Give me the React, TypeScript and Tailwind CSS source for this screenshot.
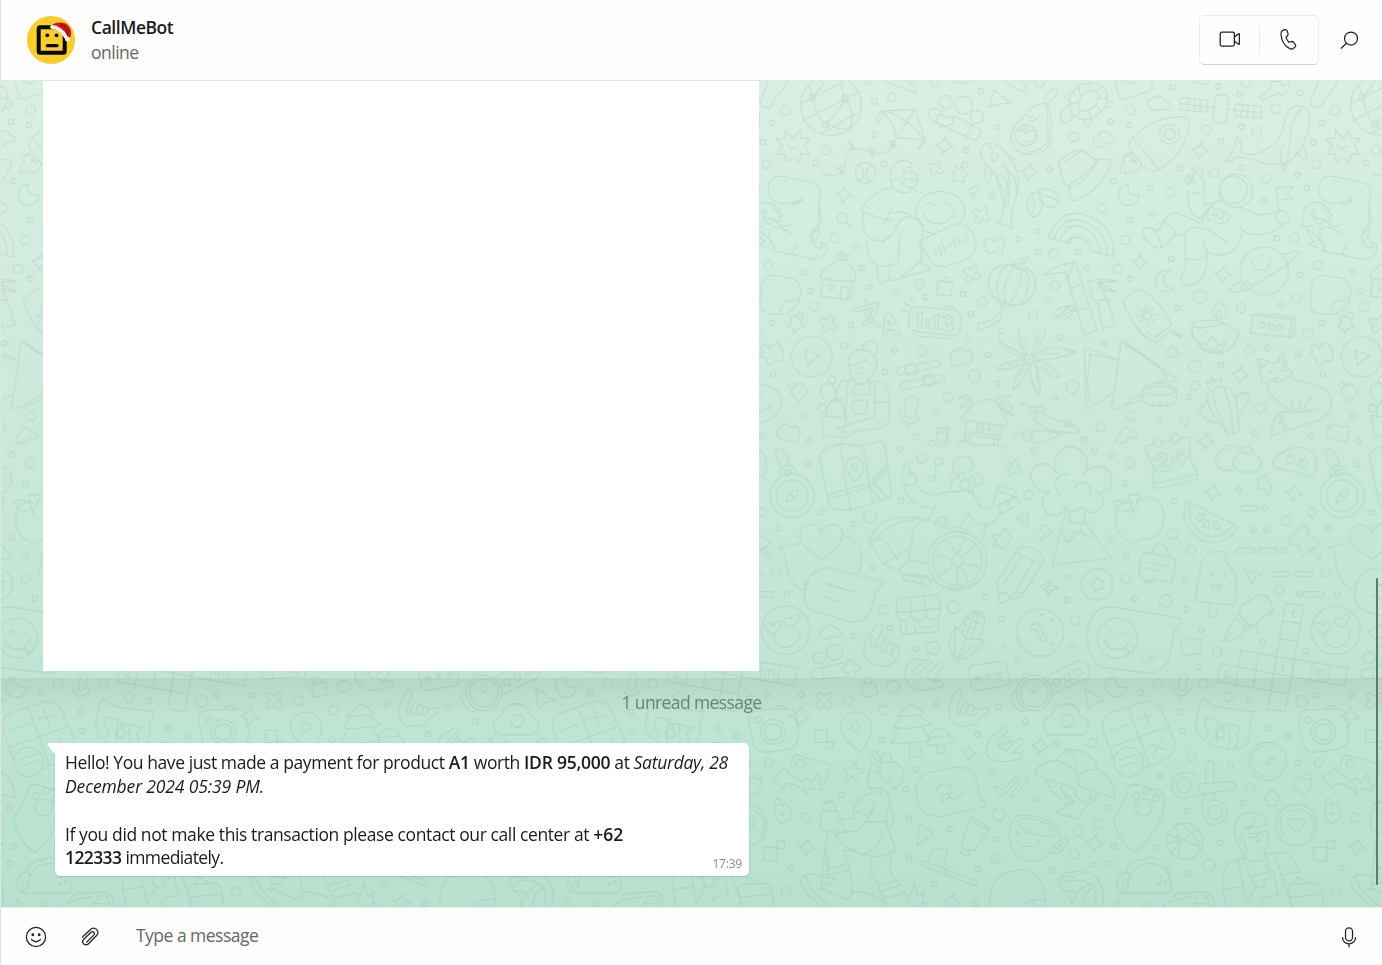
import React from "react";

type Dot = [number, number, number];

const dotsA: Dot[] = [[91,98,14],[50,135,8],[24,192,8],[34,259,13],[213,216,14],[182,254,8],[358,71,8],[410,58,13],[358,170,8],[386,257,8],[338,12,8],[540,13,13],[677,40,8],[727,148,8],[632,217,8],[711,351,8],[847,460,8],[790,483,8],[848,523,8],[896,526,14],[883,273,8],[854,13,14],[241,479,14],[303,504,8],[40,561,13],[144,583,8],[166,639,8],[321,571,8],[343,627,8],[423,644,8],[493,619,14],[512,657,8],[624,648,8],[683,670,14],[648,708,8],[737,758,8],[834,713,14],[879,669,8],[900,622,14],[177,686,14],[288,741,8],[50,735,8],[573,72,20],[626,82,27],[666,117,20],[228,81,91],[172,58,10],[270,62,10],[211,139,10],[331,284,31],[262,421,16],[230,628,9],[812,172,31]];
const dotsB: Dot[] = [[197,95,14],[138,132,8],[26,177,14],[191,141,8],[323,26,8],[460,25,8],[541,12,15],[524,49,8],[705,44,8],[632,93,14],[530,147,8],[575,161,14],[424,156,14],[468,190,8],[344,271,8],[447,284,14],[530,269,8],[604,301,14],[697,291,8],[596,368,8],[725,331,8],[256,329,8],[315,343,14],[145,309,8],[112,391,14],[195,427,8],[262,408,8],[180,486,14],[40,521,8],[67,568,8],[159,573,14],[195,603,8],[319,542,8],[405,657,20],[336,690,8],[528,690,14],[648,680,8],[694,659,14],[704,591,8],[688,478,14],[635,481,8],[729,767,14],[314,168,30],[314,168,17],[513,338,50],[505,335,41],[598,579,72],[543,625,13],[593,742,8],[618,745,8],[643,748,8],[652,418,20]];
const dotsC: Dot[] = [[54,132,8],[17,319,8],[144,258,8],[161,333,8],[157,402,8],[20,547,13],[200,548,8],[344,560,19],[295,583,8],[70,595,8],[62,726,14],[353,711,8],[434,357,8],[482,320,8],[500,385,14],[438,512,8],[389,126,8],[420,60,8],[501,63,14],[542,249,8],[578,202,14],[639,24,8],[700,74,8],[658,138,19],[728,160,8],[914,22,8],[901,203,8],[834,361,8],[937,741,8],[170,80,61],[468,118,18],[522,151,18],[823,87,14],[823,87,3],[111,497,66],[111,497,47],[99,428,9],[299,409,8],[607,693,88],[607,693,74],[607,693,17],[630,464,15],[514,755,14],[202,234,12],[231,150,11]];
const dotsD: Dot[] = [[118,40,8],[22,170,19],[389,109,19],[467,104,8],[390,166,14],[373,202,8],[553,60,14],[607,53,8],[699,72,8],[586,234,14],[199,259,14],[283,267,8],[359,272,14],[107,291,14],[57,329,8],[89,360,8],[140,374,8],[196,399,14],[181,460,8],[327,514,8],[140,625,8],[184,679,8],[567,309,8],[522,479,8],[599,535,8],[662,572,14],[566,600,8],[604,600,8],[654,662,8],[379,659,14],[182,747,14],[360,748,8],[323,611,16],[677,387,14],[713,399,14],[96,763,47],[675,380,4],[709,393,4]];
const dotsE: Dot[] = [[96,43,8],[386,90,14],[404,144,8],[295,169,8],[596,82,19],[689,51,8],[741,116,8],[934,60,8],[482,207,8],[535,204,19],[785,241,8],[192,234,18],[238,217,24],[416,320,19],[139,345,8],[36,345,8],[545,371,8],[730,382,8],[810,425,8],[380,479,8],[668,463,8],[904,490,8],[483,569,8],[712,575,8],[452,628,8],[260,645,8],[844,656,8],[463,715,8],[584,747,8],[730,703,19],[726,777,8],[721,835,14],[463,835,8],[668,868,8],[891,870,8],[537,913,8],[660,972,8],[109,863,8],[92,935,14],[906,307,10],[937,291,10],[92,151,73],[855,158,71],[860,105,3],[891,121,3],[905,156,3],[894,192,3],[55,456,37],[55,456,25],[302,442,13],[136,551,13],[837,339,53],[837,339,42],[787,761,4],[850,788,5],[83,700,4],[10,419,9]];
const dotsF: Dot[] = [[30,122,14],[22,198,8],[209,56,8],[302,63,19],[364,88,8],[408,149,8],[457,217,14],[402,262,8],[278,311,14],[227,338,8],[414,310,14],[491,351,14],[551,362,8],[593,186,8],[643,30,14],[721,214,8],[702,43,8],[710,364,18],[348,396,8],[352,452,8],[82,489,14],[379,529,14],[285,588,8],[498,557,8],[610,445,8],[667,469,8],[699,549,8],[555,623,14],[535,669,8],[367,693,8],[132,684,8],[102,732,14],[39,755,14],[146,798,8],[276,802,8],[29,822,14],[86,855,8],[134,850,8],[465,789,8],[432,857,19],[372,881,8],[239,974,8],[5,60,8],[157,174,60],[191,546,44],[607,544,57],[214,647,10],[245,633,10],[273,656,10],[236,682,26],[358,616,22],[450,698,22],[359,784,54],[694,735,62],[288,890,3],[301,905,3],[283,911,3]];

const pathsA = [
  // globe
  "M138 76L270 10M143 128L316 40M200 165L318 98M172 58C180 100 190 120 211 139C240 152 275 160 289 145M162 20L172 58M172 58C200 30 215 0 220 -9M211 139C245 110 260 85 270 62C290 85 295 110 288 145M270 62L250 -6",
  // badge
  "M113 182L134 154L136 180L163 182L148 204L163 229L136 228L134 256L114 239L92 252L92 228L66 228L83 204L62 182L92 181L90 154ZM97 200L108 214L130 203",
  // kite
  "M382 99L480 94L510 186L423 178C420 145 405 125 382 99ZM382 99C420 102 460 125 510 186M480 94L438 157M382 99L362 120L372 132L388 106M510 186L486 210L496 216L508 190M423 178C420 220 380 235 346 223C310 208 290 205 277 218C268 240 275 265 260 280C240 296 215 294 199 286",
  "M280 192L300 212L288 214L290 190ZM347 212L360 210L350 230L360 234L347 234ZM404 190L426 206L406 206L416 190ZM244 270L268 284L256 288L262 266Z",
  // bench and hearts
  "M540 91C520 90 510 110 530 125L655 186C670 190 680 170 675 155L645 138M540 91L565 100M595 112L645 138C650 155 640 168 630 172M554 148C545 130 540 105 558 108C566 110 568 120 574 119C590 104 602 125 590 138Z",
  "M386 10L482 45C488 30 484 25 455 10M586 10C600 17 630 17 645 10M752 10C770 25 790 40 812 42C820 35 814 20 800 10",
  "M716 36L767 75L727 79L700 88Z",
  // avocado
  "M866 77C830 75 820 110 785 135C760 160 763 210 800 225C840 238 885 220 888 180C884 140 900 90 866 77ZM866 77C870 55 880 35 905 28C920 45 890 65 872 79M875 85C882 120 875 150 880 185C870 210 840 222 820 222M817 112Q825 122 832 112M839 120Q846 128 851 120M821 127Q830 135 837 127M806 190Q817 195 826 187M788 150L798 160L812 148L828 160L840 158L850 156M840 168L850 176M806 160Q810 168 816 160",
  "M960 45C940 40 925 50 932 65L948 70M950 76C920 90 910 110 920 130C930 140 945 132 952 115",
  // ball
  "M310 262C330 275 330 295 314 310M352 262C330 275 328 295 344 314",
  // man with laptop bubble
  "M413 328C400 300 405 252 440 248C465 246 475 260 470 268L458 267C445 280 442 295 450 306M413 328C400 305 425 295 435 305L440 320M470 274L470 282L486 287C488 296 483 298 487 304C490 320 478 330 466 330C445 328 440 310 450 306C465 295 475 310 487 304M455 286L470 282M464 310Q472 316 478 310M415 325L420 335C440 348 460 345 468 338L468 332M413 328C370 330 325 370 318 400L395 427L410 388M470 332L500 345M410 405C430 400 460 402 465 415C440 418 430 430 425 445C410 490 370 495 345 480C325 465 318 430 325 403M465 418C485 418 500 430 503 455L497 550L427 605M335 483C330 530 350 565 385 565L430 555L433 478M384 493L402 473M385 440L392 425L410 425M405 560L402 610L525 575C525 565 505 555 490 552M368 564C365 590 368 615 380 617C395 612 395 600 402 598",
  "M507 442A74 58 0 1 1 618 430",
  "M515 378Q525 365 536 384M565 376Q575 363 586 382M505 402C515 450 590 450 598 395",
  "M488 493L590 442C625 425 650 450 660 485C670 520 650 540 610 553L575 564C540 572 530 555 510 520ZM505 458L535 468M540 515L545 528M550 500L560 532M560 495L572 522M573 504L576 510M584 492L588 508M595 484L602 510M604 478L614 500M614 488L618 496M624 472L630 490M634 466L640 486",
  // pins and puzzle
  "M602 262L608 272L625 266L624 280L642 288L625 300L626 315L610 306L590 310L600 292L590 282L604 280ZM619 266Q622 252 632 253Q642 254 635 270M616 284L620 286",
  "M639 338L664 322Q675 328 666 340Q660 348 650 344L662 360Q652 366 646 352Z",
  "M690 486L708 480L715 488L724 486L731 477L745 480L748 504Q742 508 742 515L741 528L727 526L717 518L710 528L694 520L696 506L688 502Z",
  "M107 715L120 712L124 720L144 720L136 736L148 748L128 752L118 766L114 752L97 748L107 738ZM125 712Q128 700 138 704Q148 708 142 722M120 738L124 741",
  // koi
  "M680 210C690 190 720 190 745 215C780 250 800 300 785 350C775 380 765 400 770 452C755 440 740 435 722 437C745 425 750 385 752 350C740 330 735 320 725 300C720 280 690 260 680 240C675 230 675 220 680 210M694 252C688 280 690 305 698 313C708 308 710 280 704 262M752 229L780 240C775 248 765 248 760 246M700 200C715 210 715 225 708 235L710 242C720 262 730 240 728 225M742 255C770 280 765 330 758 385C742 390 745 350 732 325C720 300 730 285 742 295C760 310 758 330 758 350M750 270C785 290 788 330 780 370M688 232L690 230",
  // beans
  "M830 346C812 360 812 400 830 415C845 422 862 400 862 375C860 350 845 340 830 346ZM830 346C842 370 838 390 830 415M848 345C850 330 880 325 900 345C915 360 915 380 895 388C870 390 855 375 850 360M852 344C870 360 890 350 909 372",
  // dinosaur
  "M85 295L175 314C195 320 200 335 194 360L190 470C180 495 172 495 170 480C172 450 180 440 178 465M85 295C45 290 35 320 42 350C50 370 75 380 105 375L140 368M110 372L118 384L124 373L132 378L132 366L142 366L132 356M84 309Q90 306 94 311M159 334L160 335M190 365L197 395L190 410L203 418L194 440L186 440L182 462L172 462L170 488C185 520 208 510 200 500C190 480 225 500 212 525C195 545 175 545 155 540L112 530L50 518L60 502M112 530L123 500M55 375C50 390 60 400 65 398M55 375L62 388L75 392L68 402L83 412L74 416L76 430L62 430L56 420M64 430C75 448 100 450 115 433M110 466L72 447C50 440 35 460 48 490L60 510M48 490L5 450L16 480L30 490L8 500L42 510M28 395C15 395 20 420 35 436C45 443 55 435 53 427L44 420L36 425L28 412L34 404ZM52 378C20 362 -8 385 -5 420L-11 444L25 444",
  "M274 432L287 446",
  // hut
  "M197 590Q205 570 230 560Q245 545 250 545L276 545Q280 560 301 582L300 608Q290 616 284 606Q276 616 270 606Q262 616 256 606Q248 614 242 604Q232 612 228 602Q218 610 213 600Q203 608 197 596ZM203 606L197 655L286 665L293 612M256 661L258 635C264 622 280 625 280 638L277 663M250 545L246 528Q254 522 258 538L257 518Q264 518 264 536Q272 520 277 530L270 545",
  // sticker
  "M20 620C25 598 40 590 60 592L105 600C130 605 140 625 137 645C135 680 110 710 75 710L45 706C18 700 12 690 17 670ZM137 655C120 670 110 665 90 670C78 680 80 700 68 709",
  // translate glyph and clock
  "M296 694Q290 700 300 704L374 680Q380 674 372 671ZM325 664Q322 660 330 662L340 682M370 684C365 710 340 740 330 742Q320 740 324 734C340 720 352 705 356 690M328 696C334 716 350 740 372 752Q378 748 372 740C355 730 345 715 340 694M383 765L390 710Q400 698 408 708L436 770L424 773L416 756L398 755L394 768Q386 774 383 765ZM398 742L400 725L410 742Z",
  "M482 686L590 695Q620 698 619 730L615 755Q612 775 590 772L485 760Q460 755 460 735L463 705Q465 686 482 686ZM565 692Q570 682 590 686L600 694M478 766L482 774L600 783M446 673L460 682M466 658L474 673M438 697L455 699M483 712L490 702L502 704L500 750L488 748L490 716ZM513 722L522 724L520 732L512 730ZM513 740L522 742L520 750L512 748ZM534 712L552 708L548 755L538 752L540 724ZM560 716Q580 704 592 720Q595 730 586 734Q600 742 594 755Q580 765 560 754L562 744L580 746L578 738L570 736L572 726L580 724Z",
  // padlock
  "M550 608L588 613Q594 614 592 622L588 650Q586 656 578 654L548 650Q542 646 545 638ZM564 608Q566 594 576 597Q584 600 580 612",
  // lantern
  "M773 560C730 555 700 580 700 610C700 640 715 660 735 670L780 682C815 680 840 655 841 620C842 590 830 575 808 567M773 560L808 574Q814 582 808 580L774 566Q770 560 776 556L790 558M729 664Q725 672 735 676L768 686Q772 684 764 680M753 564C725 580 720 640 735 664M778 568C755 585 740 640 752 672M798 578C800 610 785 650 764 678M812 580C830 600 820 660 790 680M795 560Q796 540 812 535Q825 538 812 550L800 562M741 682L733 704L742 720Q720 740 670 758L670 735Q710 730 728 712",
  // rainbow edge
  "M880 478C895 435 920 410 960 405M896 485C905 450 925 430 960 423M914 490C925 460 940 450 960 445M880 478L943 496L950 480",
  // bamboo leaves
  "M866 590Q900 560 958 552L938 600M866 590L932 582L955 660M895 706Q920 680 945 685L900 720M895 706Q900 735 960 690",
];
const pathsB = [
  // turtle shell
  "M38 20L75 14Q110 12 124 38Q135 70 110 100L80 122Q45 130 22 108Q8 80 14 60ZM48 56L66 40Q90 30 100 50Q102 70 88 86L64 100Q40 100 38 78ZM38 20L48 56M75 14L76 38M112 24L94 42M130 60L102 62M110 100L92 82M80 122L70 98M36 118L46 94M12 80L38 72M124 68Q142 70 142 80Q138 90 122 88M58 124Q55 140 70 142Q80 138 78 122",
  "M150 10L162 56Q165 66 180 62L252 40Q262 36 262 24L258 10M174 10L200 18L210 10M376 10L425 20L430 10",
  // clouds
  "M258 90C240 80 245 60 262 64C270 50 290 50 296 66C312 70 320 80 312 92C300 100 290 90 286 94C270 102 262 98 258 90Z",
  "M94 202C76 190 88 170 100 175C105 155 130 155 132 170C150 170 156 190 140 194C125 186 120 200 116 204C105 210 98 208 94 202Z",
  // satellite
  "M348 58L422 66Q428 68 427 76L424 98Q422 104 414 102L350 96Q342 92 343 84L345 66ZM344 76L426 86M372 61L368 98M390 63L386 100M408 66L404 101M427 86L445 89M460 50L480 52Q490 54 490 64L484 126Q480 138 468 136L452 134Q442 130 444 120L450 60Q452 50 460 50ZM489 93L508 98M516 78L584 84Q592 86 590 94L588 116Q584 122 576 120L516 114Q508 110 508 102L510 84ZM508 96L590 104M532 80L528 116M550 82L546 118M568 84L564 120",
  // rocket
  "M203 180C235 145 275 120 345 115C370 115 375 130 370 155C360 200 330 250 282 275C265 285 250 278 235 263L198 220C188 205 190 195 203 180ZM203 180L282 275M198 226C180 225 170 240 178 256Q165 265 166 285Q175 288 180 278Q180 290 190 286L196 276L208 286Q230 270 228 255M186 232Q200 228 204 238L198 250L212 248L214 260",
  // hat
  "M-15 268Q-28 252 0 235C30 215 45 210 65 225L90 245L140 246C130 300 80 350 30 368Q12 370 15 345L12 320C50 300 85 270 100 240M-15 268L-12 286Q-5 320 15 330C55 315 90 275 100 240M0 250L55 216M43 256L44 257",
  // moons
  "M190 319A32 32 0 1 0 223 352A26 26 0 0 1 190 319ZM316 579A32 32 0 1 0 328 630A26 26 0 0 1 316 579Z",
  "M585 52L610 42L622 10L650 10M585 52Q580 60 594 66L640 45L650 52Q675 45 670 10M650 15L654 24L660 18",
  "M760 10L735 75Q740 90 765 89L785 55Q800 45 818 10",
  // whale
  "M528 220C560 245 600 220 635 190C670 140 650 95 690 85C720 78 735 95 733 130C728 190 690 260 640 258C600 266 560 235 516 238Q505 238 500 248L480 252C485 238 492 232 500 225Q510 200 514 175C530 190 532 200 528 220M715 85C690 110 675 150 676 165L674 205C668 235 665 270 655 282C645 270 645 220 653 198M712 200Q730 230 724 247L692 222M671 146L671 148M650 260L662 258",
  // astronaut
  "M369 320C355 310 360 290 372 292L385 300L380 270Q390 265 393 290Q400 260 410 270Q415 285 408 295C425 310 420 340 400 348L368 340C365 380 380 425 410 420L415 405M418 345L418 380L440 375M410 437C420 400 440 370 470 368M408 435L330 403C310 405 295 430 278 458L240 448C225 465 240 500 285 512L335 468L360 473M298 434C325 440 330 460 330 475M240 448C270 445 290 490 285 512M487 495C450 460 400 435 370 455C350 470 362 500 362 575C345 590 340 620 370 622C400 620 425 600 427 530C420 500 415 490 415 486M364 540C385 550 415 545 425 530M427 520C470 545 520 530 534 455L522 447M534 458C570 480 630 470 652 438M528 388C560 400 590 425 638 400M640 400L634 330L685 325L665 345L686 363L638 366M440 388L475 398Q495 405 493 420Q485 440 465 436L438 428Q420 420 430 400ZM450 396L442 412L464 414M458 400L452 422M468 408Q480 400 478 412Q470 422 464 422L478 428M520 315L532 335",
  "M380 292Q385 310 370 318M365 295L390 315",
  // rainbow
  "M0 410C60 390 150 440 145 520L145 537L78 518C75 490 50 470 15 480Q12 495 0 493M0 430C60 415 125 450 127 530M0 450C50 430 100 460 105 525",
  // bamboo
  "M0 560L30 550L95 755L58 770L0 580M15 630L50 620M35 700L72 688M70 615Q80 660 100 680L112 752L150 740L128 670L98 612L155 608M98 668L128 664M70 612Q100 595 155 610L98 612L150 640Q110 640 98 612M0 690Q20 675 30 690Q15 720 0 725",
  // planet
  "M560 550Q570 578 590 577Q615 575 617 545M577 535L580 537M592 530L594 532M655 530Q700 515 704 522Q700 535 668 556M555 628L668 560M530 610Q500 620 492 640Q510 645 535 635",
  // surfboard
  "M175 665L215 635Q225 632 250 648Q300 690 320 742L268 780M175 665Q175 690 210 740L240 780M238 712Q240 700 252 702Q264 712 254 724Q240 730 232 718Q230 700 242 694M243 680L245 690M222 690L230 698M215 712L226 712M222 732L230 726M247 742L247 734M268 734L262 726M265 708L275 709M262 690L256 696M322 760L350 770L348 780",
  // candle
  "M380 740Q390 725 440 726Q500 735 520 770L522 780M380 740Q390 755 440 746L478 738M380 740L382 780M460 724C435 710 440 690 462 668C490 690 490 712 470 724M460 724Q445 710 460 698Q475 710 462 722M424 760L425 761M450 757L451 758M474 770L475 771",
  // box
  "M564 710Q570 702 690 718Q692 720 690 730L680 780M564 710L556 765M564 710L680 725L690 718M680 725L672 780",
];
const pathsC = [
  // puzzle
  "M16 52L24 44Q38 44 42 56L52 42L72 38L76 54L84 60L82 92L58 94L52 104L34 100L36 86L18 80L14 68L24 64Z",
  // play
  "M150 60L194 76L158 105Z",
  "M260 37L277 41L272 58L255 53ZM115 170L138 160L160 186L133 215L107 188ZM105 172Q98 158 114 157Q125 160 124 168",
  // gardener
  "M322 60C320 40 340 28 360 36C375 50 370 70 350 78M322 60Q330 48 318 40M280 102C280 70 300 55 325 60C360 65 370 90 364 110M280 108Q285 100 295 105C320 100 330 90 335 90C345 105 360 110 366 106M284 105L288 140L302 150L303 160C315 165 330 162 335 155L335 148Q355 140 366 108M297 114L304 116M314 112L320 114M306 130Q318 138 324 124M302 150L266 152C250 155 242 190 242 206L268 208M335 153L375 154C400 160 404 190 403 217L360 216L358 260L240 297M278 155L270 260M303 160L292 190L343 195L345 155M360 158L360 216M293 212L337 210L337 235Q335 252 315 253Q293 250 290 235ZM403 217L402 275Q395 292 370 295L305 302L278 322M200 258L276 264L268 290M200 258L206 318L278 322M244 292L268 290L264 306L252 308M214 258C210 230 225 210 245 212C265 215 272 240 268 262M216 212C195 208 190 175 205 162C225 155 245 170 242 195Q240 208 225 214M228 136L230 140M242 138L238 142M188 235L192 234M194 222L198 226",
  // sliders
  "M430 112L546 91Q558 92 556 104L550 110L440 134Q425 136 423 124ZM438 158L555 134Q570 138 568 150L560 156L448 178Q434 180 434 166Z",
  // microphone
  "M452 210Q455 198 475 199Q490 205 490 215L483 258Q476 266 462 262L450 254L450 240ZM434 244Q435 275 462 282Q490 280 496 256M461 282L458 297",
  "M586 68L592 62L602 64L610 56L622 58L626 64L644 60L654 90L648 98L596 110L590 100ZM70 290L78 292L82 282L98 284L104 290L128 290L134 305L128 330L118 336L72 324L66 314Z",
  // flower
  "M815 76Q790 40 792 0M828 74Q865 40 872 0M815 76Q770 60 733 32L732 34Q750 70 810 84M835 82Q870 40 960 62Q900 95 838 90M810 90Q770 85 722 117Q760 125 813 98M815 100Q775 130 775 180Q810 150 822 102M828 102Q820 160 853 192Q862 140 835 98M838 94Q890 95 915 142Q870 140 834 98M815 60Q808 40 806 30M835 55L850 20M785 65L755 50M865 72L915 70M790 98L758 106M800 125L788 150M843 130L848 160M860 108L890 130",
  // beach hut
  "M622 262L655 225Q690 195 728 220L756 275Q752 292 742 285Q735 290 728 284Q718 290 710 282Q700 288 692 280Q682 284 676 276Q668 282 660 273Q650 280 642 271Q628 276 622 268ZM652 225Q650 205 635 196Q620 194 612 205Q640 205 648 220Q625 210 612 235Q640 225 645 230M722 215Q730 195 768 197Q745 205 740 218Q770 215 775 235Q750 222 735 225L776 256Q760 256 735 232M635 275L630 305M738 288L732 315M668 280L668 305M704 288L700 310M630 304L740 318L738 328L626 312ZM668 290L704 298M684 285L682 306M632 313L630 333M644 315L640 335M718 325L716 345M730 327L728 345M606 336Q640 330 660 345Q690 350 710 342Q735 350 750 356",
  // music notes
  "M544 335L546 296L580 294L574 340M546 306L580 308M544 340Q535 326 520 336Q514 344 526 347Q540 350 544 338M574 340Q565 328 554 338Q550 346 562 348Q572 346 574 340M542 442L540 390L560 382L564 400L541 408M542 442Q525 430 521 446Q523 458 536 452Z",
  // peppers
  "M798 222Q810 215 824 230L830 232Q850 225 866 232L862 250Q880 265 960 285M822 255Q825 235 838 252L848 240Q840 260 836 270M836 265Q870 310 960 308M775 312Q790 305 804 312M804 312Q805 295 820 300L836 305L820 312L834 322L818 334Q802 330 804 312M836 300Q880 300 918 312Q880 338 830 338",
  // map
  "M193 380Q190 370 215 355L255 341L325 348L370 334Q388 334 390 350L410 490Q410 502 400 504L288 540L240 538Q220 530 218 505ZM255 341L272 460L288 540M325 348L352 512M301 454Q272 425 272 405Q275 380 300 382Q325 385 325 408Q325 432 301 454ZM216 495L340 460L397 403M220 508L345 470L400 414M355 456L400 506M342 470L378 510M376 440L355 456",
  // compass
  "M62 362C60 385 75 415 90 420M62 362C75 348 100 370 102 405M76 440Q72 410 97 406Q125 410 124 432M93 518Q95 485 130 477Q130 505 93 518ZM104 490L118 502",
  // dancer
  "M442 438L450 400Q460 398 464 415L460 432Q475 420 482 440Q490 460 475 464L450 465L442 450M462 425Q455 440 472 436M450 465C450 500 480 530 530 534M484 464C500 490 530 500 560 490C580 480 600 490 620 482C650 470 660 500 675 530Q700 545 715 527M590 430L592 445M596 425C588 395 605 375 625 380C645 380 658 395 655 415L640 425M590 430L612 432L600 450L585 462L590 480Q605 490 618 485M616 450Q605 430 622 424Q630 430 628 450M640 450Q650 430 660 450L654 480Q640 492 634 480M660 430Q685 430 682 455Q680 466 660 465M712 530L725 480L780 500M725 480L732 466L784 480L780 490M780 500L795 518L745 550L726 530ZM738 520L764 515L762 525L750 528M522 565L547 518M618 588L640 550C655 575 670 585 695 583L678 640M690 590Q720 580 740 545M540 574L637 600Q640 612 630 610L540 585ZM550 572L552 564Q565 555 575 566L576 578",
  // wheelchair
  "M535 572Q490 560 475 600L460 690L435 715Q425 725 435 728L520 740M460 690L515 700M342 636Q360 590 380 580Q420 555 480 562L500 565M365 628Q390 575 500 565M342 636L386 700L460 655M342 636Q360 625 384 628L430 690M386 700L435 724M448 735L515 745M445 735Q440 745 448 750L505 760M607 710L607 767M607 676L580 630M620 682L664 644M624 698L676 712M591 690L534 668M594 704L550 742M616 708L640 755M607 676L632 622",
  "M779 566L820 547L816 587L806 585L798 570ZM858 600Q855 585 870 586Q886 590 882 602L892 604L862 636Q854 634 858 626L876 606M710 618L722 612L734 618L748 593L770 625L742 658L732 644L722 652L714 642L726 634Z",
  "M808 486L822 480L834 486L835 500L822 509L808 504Z",
  // pencil
  "M726 756L790 655Q800 640 850 662Q868 680 866 692L812 780M786 668L862 708M802 678L740 770M835 694L785 780",
  // tree and mountain
  "M905 430C890 390 905 350 960 348M905 430C880 380 820 400 828 445C835 480 860 490 885 484C850 500 855 555 900 557C920 552 930 540 932 528M918 496C890 475 895 430 940 432M892 706L960 697M892 706L935 525M925 600Q925 635 945 632L958 600",
  // heart on a message
  "M200 687Q130 645 134 612Q140 585 165 583Q195 585 198 612Q208 580 240 583Q265 590 262 615Q258 655 200 687ZM134 640L70 653L90 672Q95 750 130 774L152 780M265 617Q320 630 319 690Q318 715 305 735M152 780Q158 720 215 713L385 755",
  "M210 760L280 782",
];
const pathsD = [
  // letters and cup
  "M0 58L35 66L0 82",
  "M58 55Q70 52 158 90M58 55L64 235Q74 240 80 230L140 192M74 72L76 85L66 155L76 220M74 72L158 90M168 38L175 32Q220 65 335 145Q335 155 305 158M168 38L140 232Q142 240 155 236L232 208M178 40L245 85Q260 105 280 110L305 140L300 150L270 158M180 225Q205 200 232 195",
  "M232 178Q240 160 285 160Q330 165 335 178Q330 195 285 195Q235 192 232 178ZM232 178L234 210Q240 226 260 227L310 227Q330 225 332 210L335 178M240 178Q250 168 285 170Q320 170 328 180M264 215L262 226M284 215L284 226M304 215L306 226",
  "M220 0Q250 30 275 38L320 0M245 5L270 22L300 0M320 10Q350 20 350 22L330 8",
  "M316 40Q320 52 332 55Q338 65 330 66Q348 68 343 78Q330 85 305 80Q292 72 305 63Q318 60 316 40Z",
  // lotus bowl
  "M380 0Q390 50 440 68Q500 80 522 10L520 0M400 38L415 62L445 66L470 62L482 38L460 45Q455 25 440 22Q430 30 425 44ZM425 44L445 62L460 45M424 6L425 7M450 4L451 5M474 15L475 16M555 0L556 10L680 22Q690 18 690 0",
  // cactus
  "M427 210C425 180 455 165 485 172C515 180 515 210 522 300L508 310L490 314C480 300 435 250 427 210ZM450 174C435 200 460 250 490 314M475 172C495 210 500 260 505 310M430 176L424 155L438 160L440 142L452 155L468 145L470 168M428 215Q415 225 405 232C405 260 430 275 455 278M515 200Q525 185 545 188Q560 200 545 220Q530 245 520 248M530 185L532 192M550 198L556 197M400 240L408 240M412 226L416 232M545 185L542 194",
  // fox
  "M577 88Q600 85 617 100L635 98Q645 75 655 66Q665 85 663 105L683 130L670 140Q660 145 655 150L640 158L628 150L615 152L605 162L598 155L590 158Q592 140 585 125ZM588 100L590 115L606 100M640 98Q652 80 655 90L655 112M608 130Q615 120 625 130M645 122Q655 118 662 125M622 148Q630 140 640 145L636 155Q626 158 622 148M604 163Q610 195 640 215L672 240M678 145L760 168Q800 180 800 215Q795 260 750 275L620 317Q615 270 650 245L720 245Q760 240 768 228M642 262L665 248M642 262L655 268L642 280L668 285L655 296L674 298M676 210L684 240M702 210L706 240M720 240Q720 215 742 202",
  // calendar
  "M240 352Q240 348 255 344L270 342M290 340L318 332M343 325L366 320Q374 320 374 330L374 385L398 430Q402 445 390 450L278 476Q265 475 264 460L264 410L240 352M262 445Q265 462 280 460L398 432M268 342Q262 325 278 322Q292 325 291 340Q285 352 275 350ZM320 330Q315 312 330 310Q345 312 343 328Q336 340 325 338ZM268 382Q285 362 305 374Q310 390 290 412L318 406Q325 416 312 420L275 428Q268 420 275 412Q300 395 296 382Q285 376 276 392Q264 394 268 382ZM346 361Q354 358 354 366L354 378L366 376Q372 380 366 386L356 389L358 402Q352 408 346 402L344 394L322 398Q312 394 318 386ZM330 387L344 383L344 370Z",
  // dumplings
  "M474 362Q450 375 450 390Q455 420 490 422L505 420M474 362Q470 346 482 350L490 344L502 350L514 346L518 356M545 428Q505 425 503 395Q505 375 526 370L526 356L540 352L552 350L560 358L562 370Q588 380 590 400Q585 428 545 428ZM484 356L486 362M494 358L494 364M536 364L538 372M545 362L545 372M555 364L552 372",
  "M150 330Q152 318 166 312Q170 292 184 293Q195 295 196 305Q215 302 217 315Q215 325 200 326L192 322Q185 330 186 334Q170 345 156 338Z",
  "M621 402C640 360 690 345 722 356C755 365 758 400 752 425Q748 440 735 438L640 415Q620 410 621 402Z",
  "M577 446L602 434L604 458L623 464L606 498L598 478L582 476Z",
  // apple
  "M205 520Q190 510 165 525Q145 550 155 590Q170 635 205 637Q215 640 225 632Q240 622 252 628Q290 620 295 570Q300 510 260 502Q235 502 215 515M205 552L190 495L226 492ZM197 537Q185 550 160 540Q150 525 147 515Q175 505 192 518",
  // melon
  "M365 511L520 590C510 610 480 640 440 638C390 635 350 580 358 545ZM376 516C360 570 400 620 440 620C470 620 495 600 505 584M393 565Q398 550 420 556Q415 572 400 574ZM415 590Q415 575 430 570Q438 585 430 596ZM446 575Q462 578 466 592Q462 602 450 598Q444 590 446 575Z",
  "M336 624L348 636",
  "M532 527L572 527Q580 528 580 535Q580 543 572 543L532 543Q525 542 525 535Q525 528 532 527ZM522 654L562 654Q570 655 570 662Q570 670 562 670L522 670Q514 669 514 662Q514 655 522 654ZM588 654L628 654Q636 655 636 662Q636 670 628 670L588 670Q580 669 580 662Q580 655 588 654ZM628 725L668 725Q676 726 676 732Q676 740 668 740L628 740Q621 739 621 732Q621 726 628 725ZM695 725L735 725Q743 726 743 732Q743 740 735 740L695 740Q688 739 688 732Q688 726 695 725Z",
  // push pin
  "M718 585L732 602L726 612L766 634L758 650L745 650L712 680L703 655L700 642L682 644Q664 632 670 624ZM736 662L746 654L766 680Q768 692 760 688Z",
  // tree and mountain
  "M0 350C50 345 75 380 65 420L50 435C80 400 130 400 140 440C145 475 120 490 92 488C130 500 120 550 75 548L48 532C30 550 10 545 0 530M28 475C35 455 60 450 75 470Q78 485 75 494M8 530L14 576L60 580L58 545M60 576L140 685L0 700M0 635Q25 640 30 610L34 600L40 612L48 600Q60 625 95 624",
  // message bag and popsicle
  "M230 680Q232 668 245 668L320 682Q334 686 332 698L325 745Q322 758 308 756L265 748L240 760L238 746Q220 740 222 725ZM264 670Q262 645 285 640Q310 645 310 678M248 696L312 710M246 714L292 724",
  "M395 780L408 705Q415 665 455 664Q485 665 485 676Q475 690 490 700L492 710L502 714L500 730L515 735L512 780M435 725L448 730L436 735M486 732L472 738L485 742",
  "M538 718L590 734L570 742L562 764Z",
  "M0 268Q20 270 22 280L0 286M0 290Q40 285 44 302Q30 312 0 308",
];
const pathsE = [
  "M2 35L48 35Q56 36 56 43Q56 51 48 51L2 51Q-6 50 -6 43Q-6 36 2 35",
  // heart eyes
  "M54 166Q32 150 28 136Q34 124 46 130L54 138Q64 118 76 126Q84 140 54 166ZM112 143Q88 132 86 120Q90 108 106 114L110 118Q120 98 132 103Q140 116 112 143ZM54 174Q65 200 92 203Q135 195 136 150",
  "M148 40Q146 80 180 94L290 126Q325 130 345 95L365 32Q372 22 386 12L382 2M148 40L152 0M210 10L308 40M202 48L262 68M448 0L500 12M530 0Q600 50 676 0",
  // cloud
  "M198 170Q185 150 208 146Q215 132 228 134Q238 136 240 146Q260 148 260 160Q256 172 242 172L230 166Q224 180 210 178Z",
  // hands
  "M378 130Q368 125 350 155Q325 185 326 215Q335 255 385 260Q430 250 433 220Q434 200 418 196L410 230M378 130Q388 135 378 158L368 178M352 168Q340 195 352 200Q362 200 370 175Q382 155 390 175L374 205Q362 210 364 195M390 175Q405 170 402 185L390 215Q380 218 378 205M402 188Q418 185 418 198L406 222Q395 225 394 212",
  "M450 290Q450 240 490 236L505 240Q510 248 470 275M505 242Q530 238 530 248L482 286Q470 284 474 270M530 250Q545 255 540 262L500 295Q490 292 495 280M540 262L555 245Q568 240 570 252L535 305L555 302Q570 310 560 322Q520 330 495 332Q455 320 450 290M515 290L535 305",
  "M612 328Q625 330 618 350L612 370Q600 400 612 402L626 370Q640 360 640 375L632 402Q620 410 618 395M642 375Q658 370 656 385L645 405Q634 408 636 395M656 385Q672 378 670 392L660 408Q648 408 650 398M612 328Q600 335 590 360Q570 410 600 435Q630 445 660 432Q680 410 700 395Q702 378 685 385L668 392",
  "M695 520Q695 470 725 460L750 442Q765 438 758 452L730 482Q720 500 740 492L752 472Q768 470 762 482L742 505Q730 510 735 498M762 484Q775 480 772 492L755 512Q744 515 748 505M772 490L795 474Q812 475 806 488L770 520L790 518Q806 525 795 538Q750 548 728 544Q700 540 695 520",
  // store
  "M432 54L540 45Q550 46 552 55L556 95Q555 108 540 116M432 54Q424 58 424 68L426 105Q430 122 445 122Q458 120 470 108L466 54M426 98L556 86M470 108Q480 122 500 120Q510 118 514 104L506 48M436 122L438 155Q440 164 450 163L540 156Q552 154 552 145L550 108M490 122L492 138Q494 144 504 143L530 140Q536 138 536 130L532 116M452 122L454 162M478 118L482 160M514 104Q520 120 540 116",
  // corn
  "M605 140Q575 180 584 205L600 238M605 140L632 175L608 238M632 175L690 180Q670 225 610 240M600 142L600 230M690 180Q650 195 608 238M598 234L612 240L608 250L596 245ZM615 142Q630 100 660 92Q680 90 688 110Q690 140 668 178M622 130L665 150M632 112L675 130M650 96L686 112M640 106L622 156M655 100L634 172M672 96L650 176",
  "M744 193L756 206",
  "M848 129L874 178Q870 188 860 184L843 147L832 152Q822 144 832 134ZM790 170A66 66 0 0 0 830 215",
  // password card
  "M640 270Q640 258 655 256L735 244Q750 245 753 255L763 300Q764 312 750 317L670 332Q655 332 650 322ZM668 283L668 303M656 288L680 299M657 300L679 287M700 277L700 298M690 282L712 294M690 294L712 281M733 272L733 295M722 278L745 290M722 290L745 277",
  // people bench with plus
  "M168 290Q165 265 200 262L265 248M168 290L180 297L280 290M205 293Q195 265 220 258M278 250Q275 240 287 240Q298 242 297 256L310 256Q318 262 312 274L300 276Q302 292 288 292Q276 290 278 278L266 276Q258 264 268 256L278 256Z",
  "M326 312L355 307Q362 307 363 312L368 340Q366 346 360 346L330 351L322 345L320 318ZM330 310Q326 295 338 291Q350 292 350 308",
  "M264 360L277 346L298 356L288 378L270 374ZM370 386L378 376L394 378L401 392L392 405L374 403ZM26 547L40 533L57 546L43 564L33 562ZM136 710L148 696L167 708L158 728L142 724Z",
  // camera
  "M0 390L90 387Q115 388 122 400L131 460Q130 500 100 508L30 517Q0 518 -6 490L-20 425Q-22 395 5 390M58 388Q62 378 80 376Q95 378 98 388",
  "M182 450L216 452L216 486L182 488ZM216 485L235 484L235 504L214 504ZM26 802L65 802L65 843L26 841ZM65 785L88 782L88 805L68 806Z",
  "M315 517Q255 470 257 438Q262 398 302 396Q346 402 350 438Q348 485 315 517Z",
  // trees
  "M424 408L465 373Q485 376 507 400Q470 412 424 408ZM436 410L416 443Q470 450 528 432L490 405M430 446L409 490Q470 492 525 480L500 440M466 490L462 534L504 528L492 488M518 472L545 443Q570 448 588 465Q550 475 518 472ZM525 474L513 495Q560 500 600 485L580 466M548 498L548 521L572 518L566 494",
  // arrow and picture
  "M106 560Q112 525 125 525L215 550Q226 556 224 565L205 625Q200 635 190 630L165 625M138 605L155 592L168 608L190 580L198 628M52 592L95 562L100 580Q150 600 158 643Q120 605 88 612L86 630Z",
  "M294 550Q302 544 304 552L304 568L318 566Q328 572 322 578L306 582L312 596Q308 606 300 600L292 588L280 602Q270 606 270 596L280 582L268 572Q268 562 276 562L290 568Z",
  // walking girl
  "M380 550Q362 540 348 520Q360 505 372 525L378 548Q380 520 400 514Q415 530 405 545ZM348 560Q345 545 365 552L368 580M375 555Q370 580 385 605L405 608Q410 590 400 588M405 545Q445 550 447 590Q440 620 415 625L410 615M348 560L338 590L342 605L338 615Q340 632 380 640L382 625L340 625M352 575L358 578M350 640Q310 650 294 690L330 705Q355 700 358 665M385 630Q405 640 404 670L392 724L330 725M358 665Q358 710 300 755L245 756Q200 760 197 745Q195 700 205 690L240 695M255 715L290 717L298 695M392 724L422 812Q375 840 330 825L300 815Q250 790 240 765L270 755M404 670Q420 715 412 735Q400 750 396 730M205 690Q200 675 215 670Q240 660 240 680L240 695M210 670Q215 660 232 664M243 690L272 755M382 760Q370 810 318 825M218 760L210 800L220 860L218 885L285 872M218 868L280 850L285 870M210 800L196 940M265 812L300 810M265 812L278 848M350 828L348 880L370 915M408 828L404 870L420 900M370 915L430 900L435 916L372 935ZM378 935L385 955L455 938M285 872L292 940Q290 955 270 958L198 925L200 910Q230 920 240 890M136 905Q145 875 180 885L235 895M136 905Q145 940 175 955L200 980M150 885Q165 930 190 950L225 980M290 935Q350 935 395 970L370 980M183 928L210 925",
  "M63 675Q55 660 66 656Q78 655 80 670L84 680M60 680L92 670Q105 680 110 705Q108 718 98 720L80 730Q66 728 60 705Z",
  // signed message
  "M484 635Q482 590 520 578L600 562Q650 555 668 610L675 650L694 674L690 680L560 708Q520 715 495 685Q485 665 484 635ZM542 638Q545 612 570 612Q600 615 585 645Q565 675 558 660Q560 645 580 640Q585 675 628 634",
  "M715 625Q720 615 728 620L742 632L785 588Q798 588 790 600L742 650ZM765 645L812 592Q825 590 822 600L772 654Q762 656 765 645Z",
  // umbrella
  "M838 584Q855 540 905 542Q950 550 968 590M838 584L960 625M905 540Q920 510 960 510M870 600Q885 640 920 655M878 605Q885 620 900 620L908 612M915 615Q930 665 960 670M930 665Q935 690 898 698L960 715",
  "M495 733L536 762L518 775L485 796Z",
  // tube and brush
  "M646 712L706 745L660 810L640 812L618 798ZM644 722L700 750M626 806L617 820L638 828L644 815M505 842L665 905Q670 918 655 915L505 858Q497 848 505 842ZM518 842L530 815Q525 805 545 812Q560 800 575 805Q582 815 575 825L565 862M576 865L568 885",
  // mug
  "M764 770Q760 710 800 705Q870 705 905 745L912 765M764 770Q768 830 820 843Q870 848 895 800M790 722Q800 705 860 725Q900 745 898 765Q870 775 815 755Q788 738 790 722ZM912 768Q940 770 938 790Q925 820 890 820M900 802Q895 790 915 780Q930 785 905 807ZM788 782Q800 805 838 798",
  // watch and strap
  "M800 292Q805 275 825 283M868 292L960 245M890 345L960 312M785 330Q765 345 768 355Q780 390 805 395L815 388M823 326L838 340L846 322",
  "M868 445Q860 415 890 408Q895 375 930 370Q955 372 960 385M868 445Q872 463 885 464L960 464M948 430Q940 445 928 440Q910 425 925 408Q940 395 950 408L942 410",
  // plants
  "M445 935L465 950L478 905L488 952L508 935L500 975M455 950L470 980M488 980L515 965L518 980",
  "M706 980Q695 890 770 875L800 868Q860 880 872 950L868 980M806 980Q815 955 870 958M835 960L832 980",
  "M915 900Q920 875 960 876M915 900Q908 915 925 930L960 938M918 895Q930 885 960 892M924 912L925 913M935 910L936 911M928 920L929 921",
  "M726 0L734 70L795 50L835 0M734 40L752 38M752 38L765 55Q770 35 800 40",
  "M862 30L884 15L886 0M884 15L908 20L888 30L882 48L875 32Z",
];
const pathsF = [
  // star badge and popsicle
  "M84 0L88 10L76 20L88 24L92 38L100 26L116 28L110 14L118 2L104 4L96 -10L90 4ZM240 0L262 10L268 0M320 0L322 12M396 30L392 55Q392 65 405 66L495 74Q510 72 512 60L512 0M396 30L398 0M438 14L472 16M442 16Q440 40 455 38Q468 34 466 16M453 18L454 28M438 70L430 105Q435 115 448 112Q458 105 462 72M556 0L562 15L568 0",
  "M67 180Q62 150 85 105Q105 75 150 82L340 114Q355 118 352 125Q330 145 328 155L312 235Q290 285 240 278L110 262Q75 245 67 180ZM133 160Q140 140 150 160M173 165Q180 150 190 165M120 178Q125 210 155 208L175 205Q192 195 192 178M175 205Q185 225 198 220Q210 210 200 195M180 202L192 215M228 235L240 248L262 228M250 250L282 224",
  "M346 186L355 178L362 182L370 174L382 174L388 180L405 178L410 212Q408 220 400 220L362 226Q352 224 350 215Z",
  // pen
  "M525 95Q520 85 530 78L575 48Q600 35 620 75L622 90L565 135Q555 142 545 130L523 100M512 108L522 102L555 140L545 150ZM512 115Q490 140 475 182Q480 188 490 182Q535 170 540 148M480 180L500 158M595 43Q615 50 615 60L625 92Q622 105 610 108M575 130Q572 150 585 160",
  // crossword
  "M662 70L716 77L660 395L608 387ZM657 124L708 131M647 176L698 184M637 230L690 238L848 264L838 318L680 290L669 342L457 305L468 252L680 290L690 238M520 260L510 316M637 230L528 210L520 260M580 219L564 325M633 230L618 335M742 246L734 300M795 256L786 308M478 285Q478 270 490 272L488 290L496 292M488 285Q476 296 478 285M688 85L682 108Q684 114 692 110M678 95L695 93M652 258Q660 275 648 272M655 245L656 246M750 288Q748 265 758 268Q764 275 760 290Q766 262 776 270L776 290L780 288",
  // moon, mic, cursor
  "M150 289Q118 295 122 325Q130 350 155 352Q180 350 187 320Q150 330 150 289ZM345 288Q355 278 368 288L362 325Q350 338 338 325ZM325 320Q325 345 348 348Q372 345 374 325M344 350L342 358M61 325L118 362L88 368L70 390Z",
  "M0 375Q40 365 45 408Q75 415 70 448Q65 463 45 464L0 464M0 440Q20 450 28 425L25 410M0 510Q85 505 98 570M40 590Q60 560 105 572Q150 600 150 655L40 618ZM72 635L80 658L100 640Q105 655 60 675M0 640Q30 660 22 670Q-5 672 5 680M30 625Q25 655 55 665Q75 660 78 640M0 705L40 718Q50 690 65 680",
  // calculator
  "M114 450Q108 415 135 400L240 364Q280 362 292 395L328 480Q335 520 305 535L235 568M114 450L148 545M190 385L254 558M132 503L312 438M138 452L190 432M235 387L255 437M220 418L270 405M254 490L300 510M292 474L264 526M163 540L214 522M170 560L221 542",
  // cat
  "M413 355L452 380L520 390L568 394L554 430Q560 495 520 505Q460 515 405 470Q385 450 395 415Q402 375 413 355ZM418 410L462 420M425 415L418 440L430 452L425 475M455 418L460 440L452 455L455 485M486 430L535 445M495 435L490 460L496 475L488 500M525 442L515 465L522 480L510 505M465 430L482 432L472 445ZM455 460Q460 440 475 450Q485 465 470 475Q458 475 455 460Z",
  // dial
  "M605 590A46 46 0 0 1 605 498M604 548L625 528Q632 532 625 540L608 555ZM627 505L628 506M645 525L646 526M650 545L651 546M645 567L646 568M628 585L629 586",
  // paw
  "M145 715Q185 660 190 620Q230 605 275 640L300 655Q300 730 212 818Q160 790 145 715ZM190 620Q210 605 232 620M258 625Q295 625 298 655",
  // scissors
  "M402 612L490 605Q512 605 512 615Q512 628 500 630L405 643ZM422 605L422 555Q425 542 436 541Q448 545 446 560L446 605M400 595Q380 575 358 577Q320 580 320 616Q325 655 360 655L402 645M420 644L418 660L448 660L448 640M412 660L412 700Q420 735 452 733Q488 728 487 695Q482 665 448 660M430 624L432 625",
  // ball
  "M330 738Q352 785 338 834M308 762L412 804M320 820Q350 770 400 750M350 732Q395 765 405 812M308 790Q322 780 345 785",
  "M612 632L630 632L632 645L644 647L646 660L632 663L630 678L612 678L611 664L598 660L599 648L611 645ZM686 605L700 592L735 598L740 615L720 645L685 625ZM712 592Q720 575 732 582Q745 590 735 602",
  "M650 710A48 48 0 0 0 660 765M738 765A48 48 0 0 0 710 690M680 695L700 688M694 758Q665 735 668 720Q675 710 690 718L694 722Q710 708 720 720Q722 735 694 758Z",
  // reader
  "M510 770Q500 720 535 702Q565 690 600 712L605 735L575 740Q560 735 535 752M540 740L555 748L572 715M535 765Q520 765 526 780L540 785Q540 800 545 808L540 830Q555 848 580 846L598 838L598 810Q610 800 610 765M550 765Q560 755 578 762L575 772L555 772ZM580 762Q595 748 612 755Q612 765 590 768M570 782Q580 784 586 780M510 770Q520 800 542 835M542 832L490 848Q470 870 473 930L485 980M473 930L530 920M600 820L655 816Q690 830 702 875L655 885M605 825L610 872M520 840L545 970L570 925L560 890L625 872L640 945L592 955L590 980M536 835L555 890M628 820L650 885L682 980M612 885L614 886M670 930Q670 912 685 912L750 910Q765 912 768 925L778 980M675 952L768 942M692 912L698 890L735 910M670 930L678 978M615 895L595 900L600 915L580 925Q570 920 565 905",
  // taco
  "M155 920Q160 875 185 875Q185 850 205 848Q215 835 235 842Q250 825 270 838Q295 835 300 855Q315 870 313 885M155 920Q160 940 180 940L310 940Q320 935 318 920Q315 850 250 850Q190 860 190 920L172 935Q165 930 175 910M180 880Q195 872 195 888L185 920M178 890L180 892M186 900L188 902M176 906L178 908",
  // baskets
  "M0 880Q40 865 85 885Q125 920 112 980M0 905Q60 890 85 925Q95 940 90 980M20 980Q30 920 85 912M50 980Q60 930 90 918M0 935Q20 950 20 980M145 980L158 958L168 980M292 980Q310 960 380 950M320 955Q330 935 350 940L420 935Q445 940 448 980M385 980Q390 950 415 945Q435 955 435 980M385 970L432 972",
  "M0 262Q30 245 42 242L72 255Q75 285 65 295L0 325M40 266A10 10 0 1 0 41 266",
  "M0 505Q35 530 40 590",
];
const sparkles: Dot[] = [[568,203,27],[823,282,27],[266,350,25],[1335,217,26],[1155,552,24],[1405,588,26],[1457,890,27],[1353,1090,26],[1373,1245,26],[1617,1245,26],[883,1528,27],[134,1916,30],[642,2024,22],[855,2004,26],[156,2308,26],[590,2472,26],[1018,2296,27]];
const crosses: Dot[] = [[542,271,24],[679,411,28],[651,587,28],[219,738,28],[775,1170,27],[208,1868,30]];

function Layer({ x, y, dots, paths }: { x: number; y: number; dots: Dot[]; paths: string[] }) {
  return (
    <g transform={`translate(${x} ${y})`}>
      {dots.map(([cx, cy, r], i) => <circle key={i} cx={cx} cy={cy} r={r} />)}
      {paths.map((d, i) => <path key={i} d={d} />)}
    </g>
  );
}

function Wallpaper() {
  return (
    <svg className="absolute inset-0 h-full w-full" viewBox="1 80 1381 827" preserveAspectRatio="none" aria-hidden="true">
      <defs>
        <g id="doodles" transform="translate(755 78) scale(.33333)" fill="none" stroke="#6f9483" strokeWidth="3.3" strokeLinecap="round" strokeLinejoin="round">
          <Layer x={0} y={0} dots={dotsA} paths={pathsA} />
          <Layer x={930} y={0} dots={dotsB} paths={pathsB} />
          <Layer x={0} y={756} dots={dotsC} paths={pathsC} />
          <Layer x={930} y={756} dots={dotsD} paths={pathsD} />
          <Layer x={0} y={1506} dots={dotsE} paths={pathsE} />
          <Layer x={930} y={1506} dots={dotsF} paths={pathsF} />
          {sparkles.map(([x, y, s], i) => (
            <path key={i} transform={`translate(${x} ${y}) rotate(8) scale(${s})`} strokeWidth={3.3 / s} d="M0 -1Q.15 -.3 1 0Q.25 .15 0 1Q-.2 .25 -1 0Q-.2 -.2 0 -1Z" />
          ))}
          {crosses.map(([x, y, s], i) => (
            <path key={i} transform={`translate(${x} ${y}) rotate(${i === 5 ? 45 : 30}) scale(${s})`} strokeWidth={3.3 / s} d="M-.3 -.3V-.75Q-.25 -1 0 -1Q.25 -1 .3 -.75V-.3H.75Q1 -.25 1 0Q1 .25 .75 .3H.3V.75Q.25 1 0 1Q-.25 1 -.3 .75V.3H-.75Q-1 .25 -1 0Q-1 -.25 -.75 -.3Z" />
          ))}
        </g>
      </defs>
      <g opacity=".17">
        <use href="#doodles" />
        <use href="#doodles" x="550" />
        <use href="#doodles" x="-550" />
        <use href="#doodles" x="-1100" />
      </g>
    </svg>
  );
}

function Avatar() {
  return (
    <svg className="size-12" viewBox="0 0 48 48">
      <circle cx="24" cy="24" r="24" fill="#f9ce2b" />
      <rect x="11.7" y="11.300" width="26" height="25.500" rx="1.500" fill="none" stroke="#080808" strokeWidth="4" />
      <circle cx="20.300" cy="19.300" r="1.900" fill="#080808" />
      <circle cx="29.500" cy="19.300" r="1.900" fill="#080808" />
      <path d="M20.300 29.700H30" stroke="#080808" strokeWidth="3.200" strokeLinecap="round" />
      <path d="M25.500 8.500C29 6.300 36 5.500 40 8.500C44 11.500 45.500 17 43 22L38.500 20C37 15 32 11.500 26 11Z" fill="#cf1717" />
      <path d="M34 8C39 10 41 14 40.500 20" fill="none" stroke="#8f0d0d" strokeWidth="1.200" />
      <path d="M25 11C30 11 36 15 38.500 20.500" fill="none" stroke="#f4efef" strokeWidth="3.800" strokeLinecap="round" />
      <circle cx="40.500" cy="23" r="2.500" fill="#f7f2f2" />
    </svg>
  );
}

const stroke = { fill: "none", stroke: "#222", strokeWidth: 1.25, strokeLinecap: "round", strokeLinejoin: "round" } as const;

export default function App() {
  return (
    <div className="flex h-[965px] w-[1382px] flex-col overflow-hidden border-l border-[#e3e3e3] bg-[#fefefe] font-['Open_Sans','Noto_Sans',sans-serif] text-[#1b1b1b]">
      <header className="flex h-20 shrink-0 items-start pl-[26px]">
        <div className="pt-4"><Avatar /></div>
        <div className="ml-4 flex-1 pt-[15px]">
          <h1 className="text-[17.5px] leading-[25px] font-semibold tracking-[-0.45px]">CallMeBot</h1>
          <p className="text-[17.5px] leading-[25px] tracking-[-0.5px] text-[#666]">online</p>
        </div>
        <div className="mt-[15px] flex h-[50px] w-[120px] items-center rounded-[5px] border border-[#ebebeb] border-b-[#cfcfcf]">
          <button className="flex h-full w-[59px] items-center justify-center pb-0.5">
            <svg className="size-6" viewBox="0 0 24 24" {...stroke}><rect x="2.200" y="5" width="14.200" height="14" rx="1.800" /><path d="M16.400 10L20.500 6.800Q21.400 6.300 21.400 7.300V16.700Q21.400 17.700 20.500 17.200L16.400 14" /></svg>
          </button>
          <div className="h-[30px] w-px bg-[#ececec]" />
          <button className="flex h-full flex-1 items-center justify-center pb-0.5">
            <svg className="size-6" viewBox="0 0 24 24" {...stroke}><path d="M5.300 3.600L7.600 2.700Q9.500 2.300 10.200 4L11 6.500Q11.500 7.800 10.500 8.800L9 10.300Q9.700 13.100 12 15.200L14.300 14.600Q15.700 14.200 16.600 15.400L18.400 17.600Q19.200 18.900 18 20L16.400 21.400Q14.800 22.500 12.800 21.600Q4.700 17.500 4 7.500Q3.800 4.500 5.300 3.600Z" /></svg>
          </button>
        </div>
        <svg className="mt-7 mr-[21px] ml-[18px] size-6" viewBox="0 0 24 24" {...stroke}><circle cx="14" cy="10.500" r="6.500" /><path d="M9.300 15.200L4.300 20.200" /></svg>
      </header>

      <main className="relative h-[827px] shrink-0 overflow-hidden bg-linear-to-b from-[#d9efe4] to-[#b7e1ce]">
        <Wallpaper />
        <div className="relative flex h-full flex-col border-t border-[#dfe6e3]">
          <div className="ml-[42px] h-[590px] w-[716px] shrink-0 bg-white" />
          <div className="mt-[7px] h-[65px] shrink-0 bg-linear-to-b from-[#50505018] to-transparent to-55% pt-[11px] text-center">
            <p className="text-[17.5px] leading-[26px] tracking-[-0.6px] text-[#6a8278]">1 unread message</p>
          </div>
          <div className="flex pl-[46px]">
            <svg className="h-3 w-2" viewBox="0 0 8 12"><path d="M8 0H1.500Q-.4 .3 .7 2L8 11.500Z" fill="white" /></svg>
            <div className="h-[133px] w-[694px] rounded-[5px] rounded-tl-none bg-white px-2.5 pt-[7px] text-[17.5px] leading-6 tracking-[-0.42px] shadow-[0_1px_2px_#00000020]">
              <p className="whitespace-nowrap">Hello! You have just made a payment for product <b className="font-semibold tracking-[-0.3px]">A1</b> worth <b className="font-semibold tracking-[-0.25px]">IDR 95,000</b> at <i className="tracking-[-0.28px]">Saturday, 28</i></p>
              <p className="whitespace-nowrap"><i className="tracking-[-0.14px]">December 2024 05:39 PM.</i></p>
              <p className="mt-6 whitespace-nowrap tracking-[-0.4px]">If you did not make this transaction please contact our call center at <b className="font-semibold tracking-normal">+62</b></p>
              <div className="-mt-px flex justify-between">
                <p className="whitespace-nowrap tracking-[-0.6px]"><b className="font-semibold">122333</b> immediately.</p>
                <time className="-mr-[3px] pt-[7px] text-[12px] leading-6 tracking-[-0.2px] text-[#8a8a8a]">17:39</time>
              </div>
            </div>
          </div>
        </div>
        <div className="absolute top-[498px] right-[4px] h-[307px] w-[2px] rounded bg-[#66776f]" />
      </main>

      <footer className="flex flex-1 items-center border-t border-[#edf1ef] bg-[#fefefe] pl-[23px]">
        <svg className="size-6" viewBox="0 0 24 24" {...stroke}><circle cx="12" cy="12" r="9.600" /><path d="M7.500 14.500Q12 19 16.500 14.500" /><circle cx="8.800" cy="9.700" r=".8" fill="#222" /><circle cx="15.200" cy="9.700" r=".8" fill="#222" /></svg>
        <svg className="ml-[30px] size-6" viewBox="0 0 24 24" {...stroke}><path d="M4.500 12L12.500 4.500C16.500 .8 22.500 6.300 18.800 10.300L10.500 18.800C7.300 22.200 2.700 17.600 5.800 14.300L13 7.200C15 5.300 17.700 8.200 15.800 10.100L8.700 17" /></svg>
        <p className="-mt-[3px] ml-[34px] flex-1 text-[17.5px] leading-6 tracking-[-0.52px] text-[#666]">Type a message</p>
        <svg className="mr-[21px] size-6" viewBox="0 0 24 24" {...stroke}><rect x="8.500" y="2.800" width="7" height="13" rx="3.500" /><path d="M5.500 12.500C5.500 21 18.500 21 18.500 12.500M12 18.900V21.800" /></svg>
      </footer>
    </div>
  );
}
